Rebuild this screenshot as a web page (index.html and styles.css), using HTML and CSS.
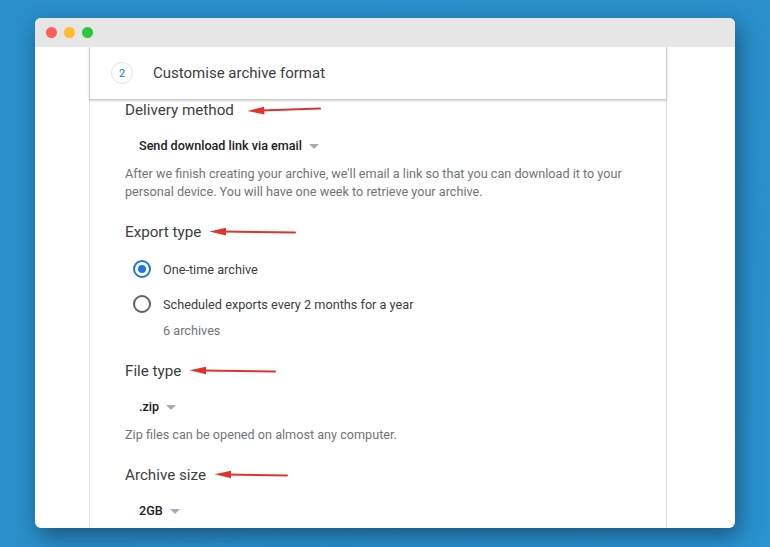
FILE: index.html
```html
<!DOCTYPE html>
<html>
<head>
<meta charset="utf-8">
<link rel="stylesheet" href="styles.css">
</head>
<body>
<div class="window">
  <div class="titlebar">
    <span class="light red"></span>
    <span class="light yellow"></span>
    <span class="light green"></span>
  </div>
  <div class="content">
    <div class="card">
      <div class="card-header">
        <span class="step">2</span>
        <span class="step-title">Customise archive format</span>
      </div>
      <div class="card-body">
        <div class="heading">Delivery method
          <svg class="arrow far" width="74" height="10" viewBox="0 0 74 10"><path d="M14 5.6 L73 3.6" stroke="#e0342b" stroke-width="2" fill="none" stroke-linecap="round"/><path d="M0.5 6 L17 1.8 L17.5 9.5 Z" fill="#e0342b"/></svg>
        </div>
        <div class="dropdown">Send download link via email <span class="caret"></span></div>
        <p class="note">After we finish creating your archive, we'll email a link so that you can download it to your personal device. You will have one week to retrieve your archive.</p>

        <div class="heading h2">Export type
          <svg class="arrow" width="87" height="10" viewBox="0 0 87 10"><path d="M14 4.6 L86 5.6" stroke="#e0342b" stroke-width="2" fill="none" stroke-linecap="round"/><path d="M0.5 4.5 L17 0.8 L17 8.6 Z" fill="#e0342b"/></svg>
        </div>
        <div class="radio-row first"><span class="radio checked"></span><span>One-time archive</span></div>
        <div class="radio-row"><span class="radio"></span><span>Scheduled exports every 2 months for a year</span></div>
        <div class="sub">6 archives</div>

        <div class="heading h2">File type
          <svg class="arrow" width="87" height="10" viewBox="0 0 87 10"><path d="M14 4.4 L86 5.6" stroke="#e0342b" stroke-width="2" fill="none" stroke-linecap="round"/><path d="M0.5 4.3 L17 0.8 L17 8.2 Z" fill="#e0342b"/></svg>
        </div>
        <div class="dropdown">.zip <span class="caret"></span></div>
        <p class="note">Zip files can be opened on almost any computer.</p>

        <div class="heading h2">Archive size
          <svg class="arrow" width="74" height="10" viewBox="0 0 74 10"><path d="M14 4.4 L73 5.6" stroke="#e0342b" stroke-width="2" fill="none" stroke-linecap="round"/><path d="M0.5 4.3 L17 0.8 L17 8.2 Z" fill="#e0342b"/></svg>
        </div>
        <div class="dropdown">2GB <span class="caret"></span></div>
      </div>
    </div>
  </div>
</div>
</body>
</html>
```
FILE: styles.css
```css
html, body {
  margin: 0;
  padding: 0;
}
body {
  width: 770px;
  height: 547px;
  overflow: hidden;
  background: linear-gradient(135deg, #2a8fcb 0%, #2b8fca 50%, #2a93d0 100%);
  font-family: Roboto, "Liberation Sans", Arial, sans-serif;
  padding: 18px 0 0 35px;
  box-sizing: border-box;
}
.window {
  width: 700px;
  height: 510px;
  background: #fff;
  border-radius: 6px;
  overflow: hidden;
  box-shadow: 4px 8px 22px rgba(10, 40, 70, 0.55);
  display: flex;
  flex-direction: column;
}
.titlebar {
  height: 29px;
  flex: none;
  background: #e6e6e6;
  display: flex;
  align-items: center;
  padding-left: 11px;
  gap: 7px;
}
.light {
  width: 11px;
  height: 11px;
  border-radius: 50%;
  display: block;
}
.red { background: #fe5f57; }
.yellow { background: #febc2e; }
.green { background: #28c840; }
.content {
  flex: 1;
  overflow: hidden;
  padding-left: 54px;
}
.card {
  width: 578px;
  height: 100%;
  box-sizing: border-box;
  border-left: 1px solid #e2e2e2;
  border-right: 1px solid #e2e2e2;
}
.card-header {
  height: 53px;
  box-sizing: border-box;
  margin: 0 -1px;
  border: 1px solid #cfcfcf;
  border-top: none;
  box-shadow: 0 1px 2px rgba(0, 0, 0, 0.18);
  display: flex;
  align-items: center;
  padding-left: 21px;
}
.step {
  width: 22px;
  height: 22px;
  box-sizing: border-box;
  border: 1px solid #dfe3ea;
  border-radius: 50%;
  color: #1a73e8;
  font-size: 11px;
  display: flex;
  align-items: center;
  justify-content: center;
  margin-right: 20px;
}
.step-title {
  font-size: 15px;
  color: #3c4043;
}
.card-body {
  padding-left: 35px;
}
.heading {
  font-size: 15.2px;
  line-height: 20px;
  color: #3c4043;
  display: flex;
  align-items: center;
  gap: 8px;
}
.heading .arrow {
  display: block;
  margin-top: -1px;
}
.heading .arrow.far {
  margin-left: 5px;
}
.h2 {
  margin-top: 21px;
}
.dropdown {
  margin-top: 16px;
  padding-left: 14px;
  font-size: 12.6px;
  font-weight: 500;
  line-height: 20px;
  color: #202124;
  display: flex;
  align-items: center;
}
.caret {
  width: 0;
  height: 0;
  border-left: 5px solid transparent;
  border-right: 5px solid transparent;
  border-top: 5px solid #a8abb0;
  margin-left: 7px;
  margin-top: 1px;
}
.note {
  margin: 9px 0 0 0;
  font-size: 12.65px;
  line-height: 18px;
  color: #70757a;
  width: 530px;
}
.radio-row {
  display: flex;
  align-items: center;
  height: 24px;
  margin-top: 11px;
  padding-left: 8px;
  font-size: 12.7px;
  color: #3c4043;
  gap: 12px;
}
.radio-row.first {
  margin-top: 15px;
}
.radio {
  width: 18px;
  height: 18px;
  box-sizing: border-box;
  border: 2px solid #5f6368;
  border-radius: 50%;
  display: flex;
  align-items: center;
  justify-content: center;
}
.radio.checked {
  border-color: #1a73e8;
}
.radio.checked::after {
  content: "";
  width: 8px;
  height: 8px;
  border-radius: 50%;
  background: #1a73e8;
}
.sub {
  margin-top: 6px;
  padding-left: 38px;
  font-size: 12.7px;
  line-height: 18px;
  color: #70757a;
}
```
